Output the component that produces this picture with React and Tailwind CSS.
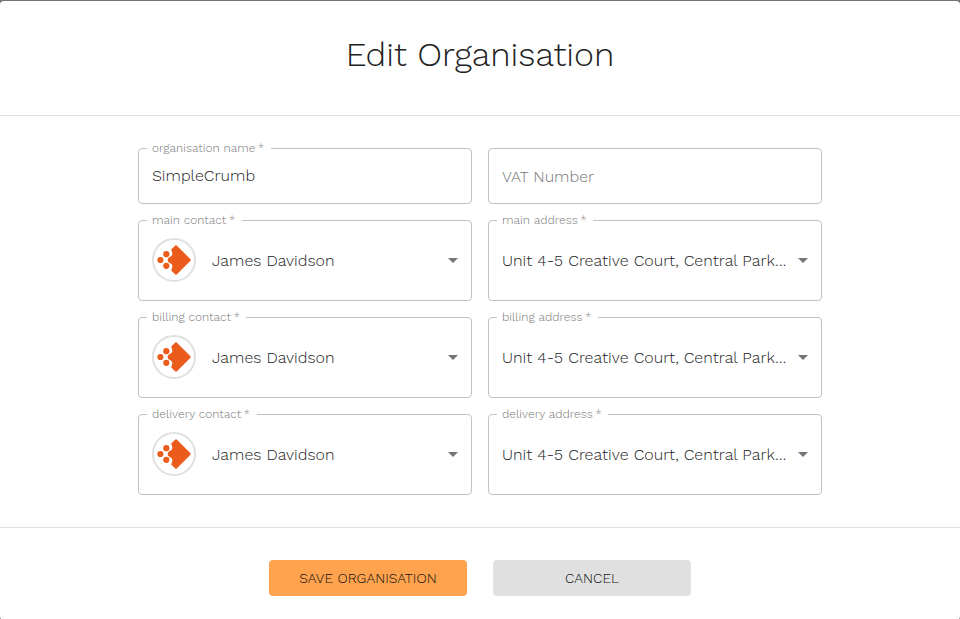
import React from "react";

function Logo() {
  return (
    <span className="flex h-11 w-11 shrink-0 items-center justify-center rounded-full border-2 border-[#e0e0e0] bg-white">
      <svg viewBox="0 0 40 40" className="h-10 w-10" fill="#ea5b1c">
        <path d="M20.8 5.9Q22 4.8 23.2 5.9L36.2 18.9Q37.3 20 36.2 21.1L23.2 34.1Q22 35.2 20.8 34.1L17 30.3A4 4 0 0 0 18 27.9A4.5 4.5 0 0 0 18.2 25.2Q17.8 23.8 16.2 23.3A3.4 3.4 0 0 1 16.2 16.7Q17.8 16.2 18.2 14.8A4.5 4.5 0 0 0 18 12.1A4 4 0 0 0 17 9.7Z" />
        <circle cx="12.3" cy="14.2" r="3.1" />
        <circle cx="6.4" cy="20" r="3.1" />
        <circle cx="12.3" cy="25.8" r="3.1" />
      </svg>
    </span>
  );
}

function Label({ text, notch }) {
  return (
    <span
      className={`absolute -top-[9px] left-2 flex h-4 items-center bg-white pl-[5px] text-[12px] leading-4 font-light whitespace-nowrap text-[#757575] ${notch}`}
    >
      {text}&thinsp;*
    </span>
  );
}

function Select({ label, notch, value, contact }) {
  return (
    <div className="relative flex h-[81px] w-[334px] items-center rounded border border-[#c2c2c2] pr-[13px] pl-[13px]">
      <Label text={label} notch={notch} />
      {contact && (
        <span className="mr-4 mb-px flex">
          <Logo />
        </span>
      )}
      <span className={`flex-1 text-[16px] font-light whitespace-nowrap text-[#222] ${contact ? "" : "tracking-[0.03px]"}`}>{value}</span>
      <svg viewBox="0 0 10 5" className="h-[5px] w-[10px] shrink-0" fill="#757575">
        <path d="M0 0h10L5 5z" />
      </svg>
    </div>
  );
}

const rows = [
  { name: "main", c: "w-[95px]", a: "w-[96px]" },
  { name: "billing", c: "w-[99px]", a: "w-[101px]" },
  { name: "delivery", c: "w-[110px]", a: "w-[111px]" },
];

export default function App() {
  return (
    <div className="h-[619px] w-[960px] overflow-hidden bg-[#757575] pt-px font-['Work_Sans','Inter',sans-serif]">
      <div className="flex h-[619px] flex-col rounded bg-white">
        <header className="flex h-[115px] items-start justify-center border-b border-[#e0e0e0] pt-8">
          <h1 className="text-[34px] leading-[42px] font-light text-[#212121]">Edit Organisation</h1>
        </header>
        <main className="flex h-[411px] justify-center pt-8">
          <div className="grid grid-cols-[334px_334px] content-start gap-4">
            <div className="relative flex h-14 items-center rounded border border-[#c2c2c2] px-[13px] pb-px">
              <Label text="organisation name" notch="w-[124px]" />
              <span className="text-[16px] font-light text-[#222]">SimpleCrumb</span>
            </div>
            <div className="flex h-14 items-center rounded border border-[#c2c2c2] px-[13px] pt-0.5">
              <span className="text-[16px] font-light text-[#757575]">VAT Number</span>
            </div>
            {rows.map((r) => (
              <React.Fragment key={r.name}>
                <Select label={`${r.name} contact`} notch={r.c} value="James Davidson" contact />
                <Select label={`${r.name} address`} notch={r.a} value="Unit 4-5 Creative Court, Central Park…" />
              </React.Fragment>
            ))}
          </div>
        </main>
        <footer className="flex flex-1 items-start justify-center gap-[26px] border-t border-[#e0e0e0] pt-8">
          <button className="h-9 w-[198px] rounded bg-[#ffa34f] text-[14px] font-light text-[#111]">SAVE ORGANISATION</button>
          <button className="h-9 w-[198px] rounded bg-[#e0e0e0] text-[14px] font-light text-[#111]">CANCEL</button>
        </footer>
      </div>
    </div>
  );
}
